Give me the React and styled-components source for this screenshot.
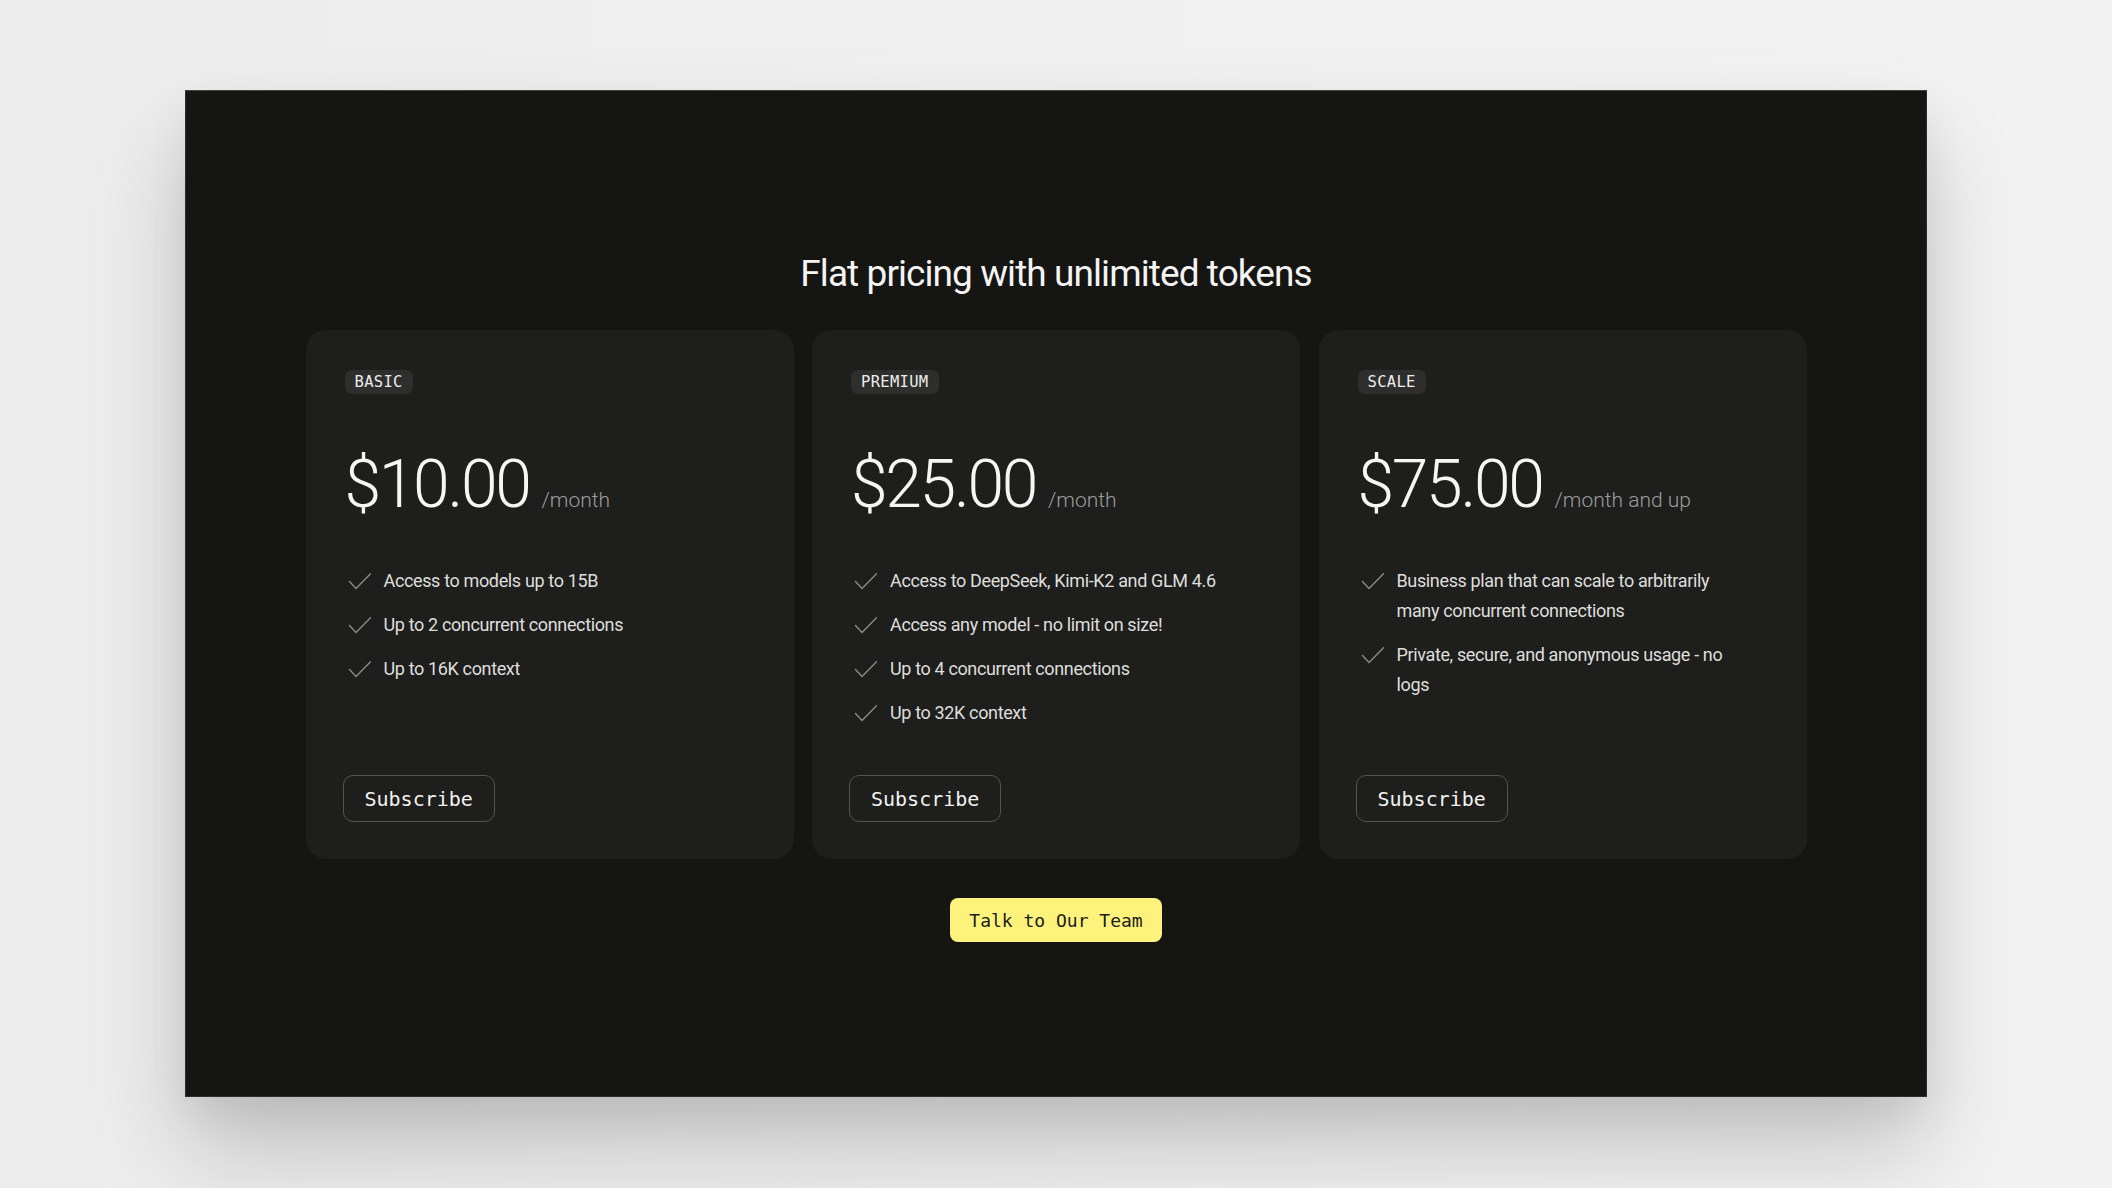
import React from "react";
import styled, { createGlobalStyle } from "styled-components";

const plans = [
  {
    tier: "BASIC",
    price: "$10.00",
    period: "/month",
    features: [
      "Access to models up to 15B",
      "Up to 2 concurrent connections",
      "Up to 16K context",
    ],
  },
  {
    tier: "PREMIUM",
    price: "$25.00",
    period: "/month",
    features: [
      "Access to DeepSeek, Kimi-K2 and GLM 4.6",
      "Access any model - no limit on size!",
      "Up to 4 concurrent connections",
      "Up to 32K context",
    ],
  },
  {
    tier: "SCALE",
    price: "$75.00",
    period: "/month and up",
    features: [
      "Business plan that can scale to arbitrarily many concurrent connections",
      "Private, secure, and anonymous usage - no logs",
    ],
  },
];

const Check = () => (
  <CheckIcon width="26" height="17" viewBox="0 0 26 17" fill="none">
    <path
      d="M4.5 8.5 L11 15.5 L25.5 0.8"
      stroke="#8a8a88"
      strokeWidth="1.4"
      strokeLinecap="round"
      strokeLinejoin="round"
    />
  </CheckIcon>
);

const App = () => {
  return (
    <>
      <GlobalStyle />
      <Page>
        <Panel>
          <Title>Flat pricing with unlimited tokens</Title>
          <Cards>
            {plans.map((plan) => (
              <Card key={plan.tier}>
                <Badge>{plan.tier}</Badge>
                <PriceRow>
                  <Price>{plan.price}</Price>
                  <Period>{plan.period}</Period>
                </PriceRow>
                <Features>
                  {plan.features.map((f) => (
                    <Feature key={f}>
                      <Check />
                      <span>{f}</span>
                    </Feature>
                  ))}
                </Features>
                <Subscribe>Subscribe</Subscribe>
              </Card>
            ))}
          </Cards>
          <TalkButton>Talk to Our Team</TalkButton>
        </Panel>
      </Page>
    </>
  );
};

const GlobalStyle = createGlobalStyle`
  html, body {
    margin: 0;
    padding: 0;
    background: #efefef;
  }
  body {
    font-family: Roboto, "Noto Sans", sans-serif;
  }
`;

const Page = styled.div`
  width: 2112px;
  height: 1188px;
  box-sizing: border-box;
  padding: 90px 0 0 185px;
  background: linear-gradient(90deg, #ececec 0%, #f0f0f0 50%, #f2f2f2 100%);
  overflow: hidden;
`;

const Panel = styled.section`
  width: 1742px;
  height: 1007px;
  box-sizing: border-box;
  background: #151513;
  border: 1px solid #2e2e2c;
  border-top-color: #454543;
  box-shadow: 0 55px 90px rgba(0, 0, 0, 0.18), 0 20px 40px rgba(0, 0, 0, 0.06);
  display: flex;
  flex-direction: column;
  align-items: center;
  padding-top: 161px;
`;

const Title = styled.h1`
  margin: 0;
  font-family: Roboto, sans-serif;
  font-weight: 400;
  font-size: 37px;
  line-height: 44px;
  letter-spacing: -0.025em;
  color: #f4f4f2;
`;

const Cards = styled.div`
  margin-top: 34px;
  display: grid;
  grid-template-columns: repeat(3, 488px);
  gap: 18.5px;
`;

const Card = styled.article`
  background: #1e1e1d;
  border-radius: 20px;
  padding: 40px 39px 37px;
  display: flex;
  flex-direction: column;
  align-items: flex-start;
`;

const Badge = styled.span`
  display: inline-flex;
  align-items: center;
  height: 24px;
  padding: 0 10px;
  border-radius: 7px;
  background: #2e2e2d;
  color: #ececea;
  font-family: "DejaVu Sans Mono", "Liberation Mono", monospace;
  font-size: 15.5px;
  letter-spacing: 0.02em;
`;

const PriceRow = styled.div`
  margin-top: 58px;
  display: flex;
  align-items: baseline;
  gap: 12px;
`;

const Price = styled.span`
  font-family: Roboto, sans-serif;
  font-weight: 300;
  font-size: 66px;
  line-height: 66px;
  letter-spacing: -0.035em;
  color: #f6f6f4;
`;

const Period = styled.span`
  font-family: Roboto, sans-serif;
  font-weight: 300;
  font-size: 21px;
  color: #9c9c9a;
`;

const Features = styled.ul`
  list-style: none;
  margin: 48px 0 0;
  padding: 0;
  display: flex;
  flex-direction: column;
  gap: 14px;
  flex: 1;
  width: 100%;
`;

const Feature = styled.li`
  display: flex;
  align-items: flex-start;
  gap: 13px;
  font-family: Roboto, sans-serif;
  font-size: 18px;
  line-height: 30px;
  letter-spacing: -0.02em;
  color: #dededc;

  span {
    max-width: 345px;
  }
`;

const CheckIcon = styled.svg`
  flex: none;
  margin-top: 7px;
`;

const Subscribe = styled.button`
  margin-top: 47px;
  height: 47px;
  padding: 0 21px;
  border-radius: 10px;
  border: 1.5px solid #535351;
  background: transparent;
  color: #f2f2f0;
  font-family: "DejaVu Sans Mono", "Liberation Mono", monospace;
  font-size: 20px;
  cursor: pointer;
  margin-left: -2px;
`;

const TalkButton = styled.button`
  margin-top: 39px;
  height: 44px;
  padding: 0 19px;
  border: none;
  border-radius: 8px;
  background: #fdf27b;
  color: #1c1c1a;
  font-family: "DejaVu Sans Mono", "Liberation Mono", monospace;
  font-size: 18px;
  cursor: pointer;
`;

export default App;
